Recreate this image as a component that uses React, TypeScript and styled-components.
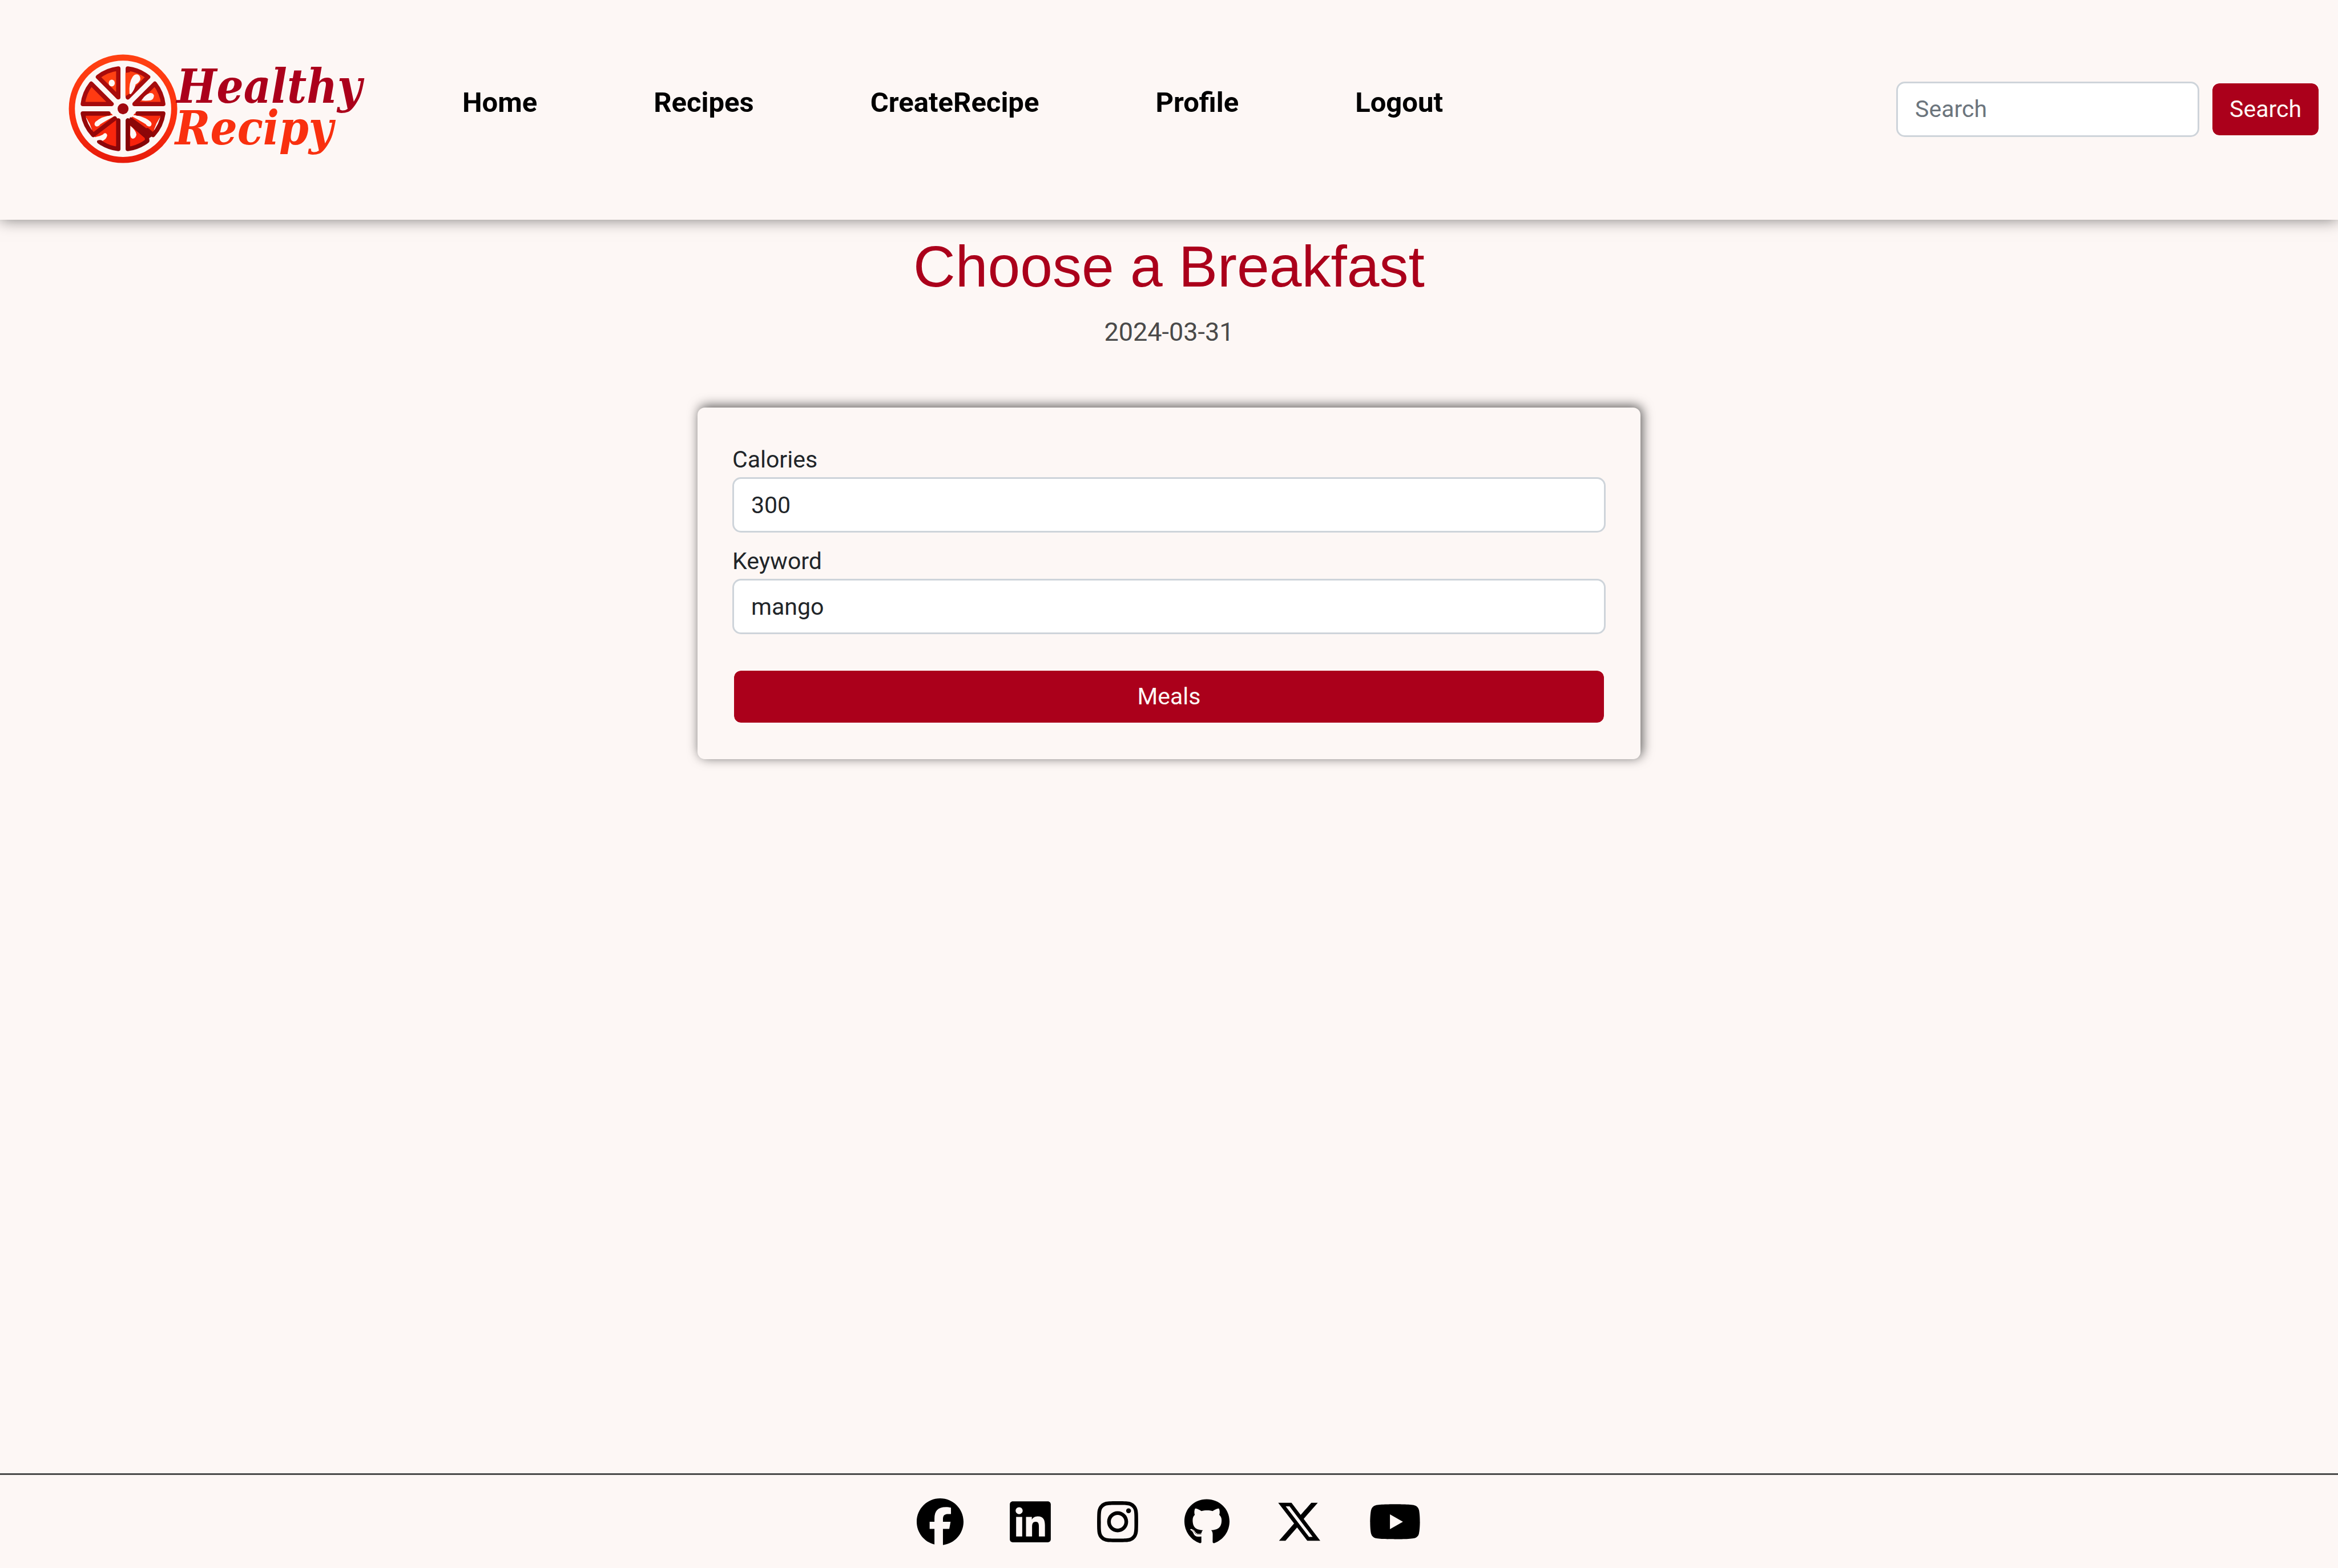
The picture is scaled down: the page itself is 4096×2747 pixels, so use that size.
import React from 'react';
import styled, { createGlobalStyle } from 'styled-components';
import { FaLinkedin, FaInstagram, FaGithub, FaXTwitter, FaYoutube } from 'react-icons/fa6';

const color = {
  page: '#fdf7f5',
  brand: '#ab001b',
  ink: '#212529',
  muted: '#4a4a4a',
  border: '#ced4da',
  placeholder: '#6c757d',
};

const GlobalStyle = createGlobalStyle`
  *, *::before, *::after { box-sizing: border-box; }
  body {
    margin: 0;
    background: ${color.page};
    color: ${color.ink};
    font-family: Roboto, "Liberation Sans", sans-serif;
    font-size: 41px;
    line-height: 61px;
  }
`;

const Page = styled.div`
  display: flex;
  flex-direction: column;
  min-height: 100vh;
`;

const Header = styled.header`
  display: flex;
  align-items: center;
  min-height: 385px;
  padding: 0 31px 3px 85px;
  background: ${color.page};
  box-shadow: 0 0 26px rgba(0, 0, 0, 0.5);
`;

const HomeLink = styled.a`
  display: flex;
  margin-right: 130px;

  svg {
    width: 595px;
    height: 246px;
  }
`;

const Nav = styled.nav`
  display: flex;
  flex: 1;
  gap: 204px;
  padding-bottom: 23px;
`;

const NavLink = styled.a`
  color: #000;
  font-size: 49px;
  font-weight: 700;
  text-decoration: none;
`;

const SearchForm = styled.form`
  display: flex;
  gap: 20px;
`;

const TextInput = styled.input<{ $width?: string }>`
  width: ${(p) => p.$width || '100%'};
  height: 97px;
  padding: 0 30px;
  border: 3px solid ${color.border};
  border-radius: 15px;
  background: #fff;
  color: ${color.ink};
  font: inherit;

  &::placeholder {
    color: ${color.placeholder};
    opacity: 1;
  }
`;

const Button = styled.button`
  height: 97px;
  padding: 0 30px;
  border: 3px solid ${color.page};
  border-radius: 15px;
  background: ${color.brand};
  background-clip: padding-box;
  color: ${color.page};
  font: inherit;
  cursor: pointer;
`;

const Main = styled.main`
  display: flex;
  flex: 1;
  flex-direction: column;
  align-items: center;
  padding-top: 21px;
`;

const Title = styled.h1`
  margin: 0 0 20px;
  color: ${color.brand};
  font-family: "Liberation Sans", Arial, sans-serif;
  font-size: 102px;
  font-weight: 400;
  line-height: 122px;
`;

const MealDate = styled.p`
  margin: 0 0 99px;
  color: ${color.muted};
  font-size: 45px;
  line-height: 67px;
`;

const Card = styled.form`
  display: flex;
  flex-direction: column;
  gap: 61px;
  width: 100%;
  max-width: 1652px;
  padding: 61px;
  border-radius: 13px;
  background: ${color.page};
  box-shadow: 3px -3px 20px rgba(0, 0, 0, 0.65);
`;

const Fields = styled.div`
  display: grid;
  gap: 20px;
`;

const Field = styled.div`
  display: flex;
  flex-direction: column;
`;

const Footer = styled.footer`
  display: flex;
  align-items: center;
  justify-content: center;
  gap: 81px;
  min-height: 166px;
  border-top: 3px solid ${color.muted};
`;

const SocialLink = styled.a<{ $width: number }>`
  display: flex;
  color: #000;

  svg {
    width: ${(p) => p.$width}px;
    height: 82px;
  }
`;

const WEDGE = 'M23.7 9.8 L82.9 9.8 A83.5 83.5 0 0 1 65.5 51.7 Z';
const wedges = [
  { angle: 180, fill: '#ff3a12', edge: '#a50a0c' },
  { angle: 225, fill: '#ff4012', edge: '#a80b0c' },
  { angle: 270, fill: '#ff4012', edge: '#a80b0c' },
  { angle: 315, fill: '#ff3a12', edge: '#a50a0c' },
];

function Logo() {
  return (
    <svg viewBox="0 0 700 289" role="img" aria-label="Healthy Recipy">
      <defs>
        <linearGradient id="rind" x1="0" y1="0" x2="0" y2="1">
          <stop offset="0" stopColor="#ff4012" />
          <stop offset="0.6" stopColor="#fc300f" />
          <stop offset="1" stopColor="#e81c0b" />
        </linearGradient>
      </defs>
      <circle cx="153.6" cy="144" r="105.5" fill="none" stroke="url(#rind)" strokeWidth="12.5" />
      <g transform="translate(153.6 144)" fill="none" strokeWidth="9" strokeLinejoin="round" strokeLinecap="round">
        {wedges.map((w) => (
          <path key={w.angle} d={WEDGE} transform={`rotate(${w.angle})`} fill={w.fill} stroke={w.edge} />
        ))}

        {/* lower left pair, sharing one membrane */}
        <path d="M-23.7 9.8 L-82.9 9.8 A83.5 83.5 0 0 1 -61.5 56 L-17 19 Z" fill="#f92c0e" />
        <path d="M-9.8 20 L-9.8 82.9 A83.5 83.5 0 0 1 -51.7 65.5 L-60 56 L-15 20 Z" fill="#f8260d" />
        <path d="M-22 13 Q-44 15 -57 27 Q-61 33 -56 36 Q-51 38 -47 32 Q-36 25 -17 15 Z" fill={color.page} />
        <path d="M-30 9.8 L-82.9 9.8 A83.5 83.5 0 0 0 -61.5 54 L-17 20" stroke="#950709" />
        <path d="M-9.8 24 L-9.8 82.9 A83.5 83.5 0 0 1 -49 67.6" stroke="#8c0609" />

        {/* lower right pair, with the thick membrane */}
        <path d="M23.7 9.8 L82.9 9.8 A83.5 83.5 0 0 0 61.5 54 L17 19 Z" fill="#f92c0e" />
        <path d="M9.8 24 L9.8 82.9 A83.5 83.5 0 0 0 50 66 L49 58 Z" fill="#f8220c" stroke="#850508" />
        <path d="M22 13 Q44 15 57 27 Q61 33 56 36 Q51 38 47 32 Q36 25 17 15 Z" fill={color.page} />
        <path d="M30 9.8 L82.9 9.8 A83.5 83.5 0 0 1 62 54 L50 44" stroke="#950709" />
        <path d="M16 20 L61 53 L50 60 L13 28 Z" fill="#8c0609" stroke="#8c0609" strokeWidth="5" />

        <circle r="11.3" fill="#a0080f" />
      </g>
      <g transform="scale(0.4464 0.3333)" fill={color.page}>
        <path d="M355 210 L378 205 L378 335 L355 355 Z" fill="#ff4012" />
        <ellipse cx="292" cy="273" rx="14" ry="21" />
        <path d="M374 340 Q370 270 388 235 Q398 216 412 220 Q424 226 424 250 Q420 268 402 282 Q398 315 380 342 Z" />
        <path d="M430 379 Q445 345 468 335 Q482 332 487 350 Q486 374 472 380 Q450 384 430 381 Z" />
        <path d="M205 612 L225 604 Q250 596 256 584 Q268 578 271 596 Q268 620 250 630 Q240 622 226 628 L210 640 Z" />
        <path d="M378 538 Q404 566 406 592 Q402 616 388 617 Q378 614 377 590 Z" />
      </g>
      <g fontFamily='"DejaVu Serif Condensed", "DejaVu Serif", serif' fontSize="97" fontStyle="italic" fontWeight="700">
        <text x="264" y="131" fill={color.brand}>Healthy</text>
        <text x="261" y="217" fill="#f9300f">Recipy</text>
      </g>
    </svg>
  );
}

function FacebookIcon() {
  return (
    <svg viewBox="0 0 512 512" fill="currentColor" aria-hidden="true">
      <path d="M512 256C512 114.6 397.4 0 256 0S0 114.6 0 256C0 376 82.7 476.8 194.2 504.5V334.2H141.4V256h52.8V222.3c0-87.1 39.4-127.5 125-127.5c16.2 0 44.2 3.2 55.7 6.4V172c-6-.6-16.5-1-29.6-1c-42 0-58.2 15.9-58.2 57.2V256h83.6l-14.4 78.2H287V510.1C413.8 494.8 512 386.9 512 256z" />
    </svg>
  );
}

const links = ['Home', 'Recipes', 'CreateRecipe', 'Profile', 'Logout'];

const socials = [
  { name: 'Facebook', Icon: FacebookIcon, width: 82 },
  { name: 'LinkedIn', Icon: FaLinkedin, width: 72 },
  { name: 'Instagram', Icon: FaInstagram, width: 72 },
  { name: 'GitHub', Icon: FaGithub, width: 79 },
  { name: 'X', Icon: FaXTwitter, width: 82 },
  { name: 'YouTube', Icon: FaYoutube, width: 92 },
];

export default function App() {
  return (
    <>
      <GlobalStyle />
      <Page>
        <Header>
          <HomeLink href="#home">
            <Logo />
          </HomeLink>
          <Nav>
            {links.map((label) => (
              <NavLink key={label} href={`#${label.toLowerCase()}`}>{label}</NavLink>
            ))}
          </Nav>
          <SearchForm role="search" onSubmit={(e) => e.preventDefault()}>
            <TextInput $width="531px" type="search" placeholder="Search" aria-label="Search" />
            <Button type="submit">Search</Button>
          </SearchForm>
        </Header>
        <Main>
          <Title>Choose a Breakfast</Title>
          <MealDate>2024-03-31</MealDate>
          <Card onSubmit={(e) => e.preventDefault()}>
            <Fields>
              <Field>
                <label htmlFor="calories">Calories</label>
                <TextInput id="calories" type="text" inputMode="numeric" defaultValue="300" />
              </Field>
              <Field>
                <label htmlFor="keyword">Keyword</label>
                <TextInput id="keyword" type="text" defaultValue="mango" />
              </Field>
            </Fields>
            <Button type="submit">Meals</Button>
          </Card>
        </Main>
        <Footer>
          {socials.map(({ name, Icon, width }) => (
            <SocialLink key={name} $width={width} href={`#${name.toLowerCase()}`} aria-label={name}>
              <Icon />
            </SocialLink>
          ))}
        </Footer>
      </Page>
    </>
  );
}
